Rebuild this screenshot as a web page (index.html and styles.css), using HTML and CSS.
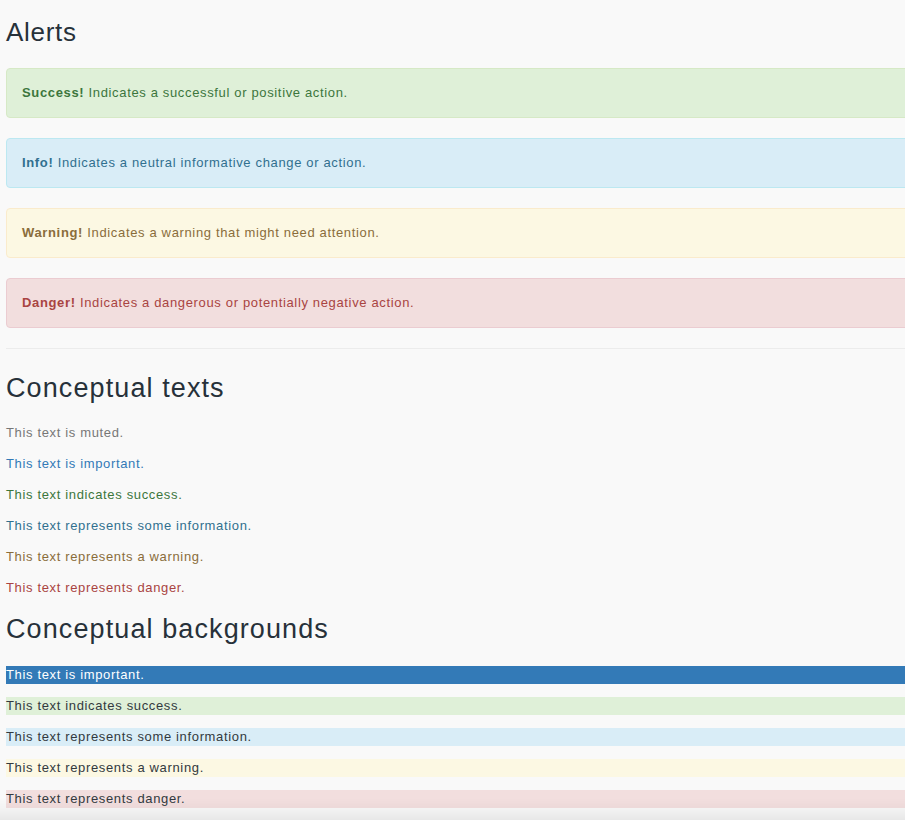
FILE: index.html
```html
<!DOCTYPE html>
<html lang="en">
<head>
<meta charset="utf-8">
<title>Alerts</title>
<link rel="stylesheet" href="styles.css">
</head>
<body>
<div class="page">
  <h1 class="title title-first">Alerts</h1>
  <div class="alert alert-success"><strong>Success!</strong> Indicates a successful or positive action.</div>
  <div class="alert alert-info"><strong>Info!</strong> Indicates a neutral informative change or action.</div>
  <div class="alert alert-warning"><strong>Warning!</strong> Indicates a warning that might need attention.</div>
  <div class="alert alert-danger"><strong>Danger!</strong> Indicates a dangerous or potentially negative action.</div>
  <hr class="divider">

  <h2 class="title title-after-hr">Conceptual texts</h2>
  <p class="line text-muted">This text is muted.</p>
  <p class="line text-primary">This text is important.</p>
  <p class="line text-success">This text indicates success.</p>
  <p class="line text-info">This text represents some information.</p>
  <p class="line text-warning">This text represents a warning.</p>
  <p class="line text-danger">This text represents danger.</p>

  <h2 class="title title-after-text">Conceptual backgrounds</h2>
  <p class="line bg-primary">This text is important.</p>
  <p class="line bg-success">This text indicates success.</p>
  <p class="line bg-info">This text represents some information.</p>
  <p class="line bg-warning">This text represents a warning.</p>
  <p class="line bg-danger">This text represents danger.</p>
</div>
</body>
</html>
```

FILE: styles.css
```css
html, body {
  margin: 0;
  padding: 0;
}
body {
  background: #f9f9f9;
  color: #333a40;
  font-family: "Liberation Sans", Arial, Helvetica, sans-serif;
  font-size: 13px;
  letter-spacing: 0.65px;
  overflow-x: hidden;
}
body::after {
  content: "";
  position: fixed;
  left: 0;
  right: 0;
  bottom: 0;
  height: 22px;
  background: linear-gradient(to bottom, rgba(0,0,0,0) 0%, rgba(0,0,0,0.025) 50%, rgba(0,0,0,0.07) 100%);
  pointer-events: none;
}
.page {
  padding: 0 0 0 6px;
  margin-right: -40px;
}
.title {
  color: #27313a;
  font-weight: 400;
  line-height: 1.1;
  margin: 0 0 21px;
}
h1.title {
  font-size: 26px;
  letter-spacing: 0.7px;
}
h2.title {
  font-size: 27px;
  letter-spacing: 1.1px;
}
.title-first { margin-top: 18px; }
.title-after-hr { margin-top: 25px; }
.title-after-text { margin-top: 18px; }

.alert {
  padding: 15px;
  margin-bottom: 20px;
  border: 1px solid transparent;
  border-radius: 4px;
  line-height: 18px;
}
.alert strong { font-weight: 700; }
.alert-success { background: #dff0d8; border-color: #d6e9c6; color: #3c763d; }
.alert-info { background: #d9edf7; border-color: #bce8f1; color: #31708f; }
.alert-warning { background: #fcf8e3; border-color: #faebcc; color: #8a6d3b; }
.alert-danger { background: #f2dede; border-color: #ebccd1; color: #a94442; }

.divider {
  border: 0;
  border-top: 1px solid #ececec;
  margin: 0;
  height: 0;
}

.line {
  margin: 0 0 13px;
  line-height: 18px;
}
.text-muted { color: #777777; }
.text-primary { color: #337ab7; }
.text-success { color: #3c763d; }
.text-info { color: #31708f; }
.text-warning { color: #8a6d3b; }
.text-danger { color: #a94442; }

.bg-primary { background: #337ab7; color: #ffffff; }
.bg-success { background: #dff0d8; }
.bg-info { background: #d9edf7; }
.bg-warning { background: #fcf8e3; }
.bg-danger { background: #f2dede; }
```
